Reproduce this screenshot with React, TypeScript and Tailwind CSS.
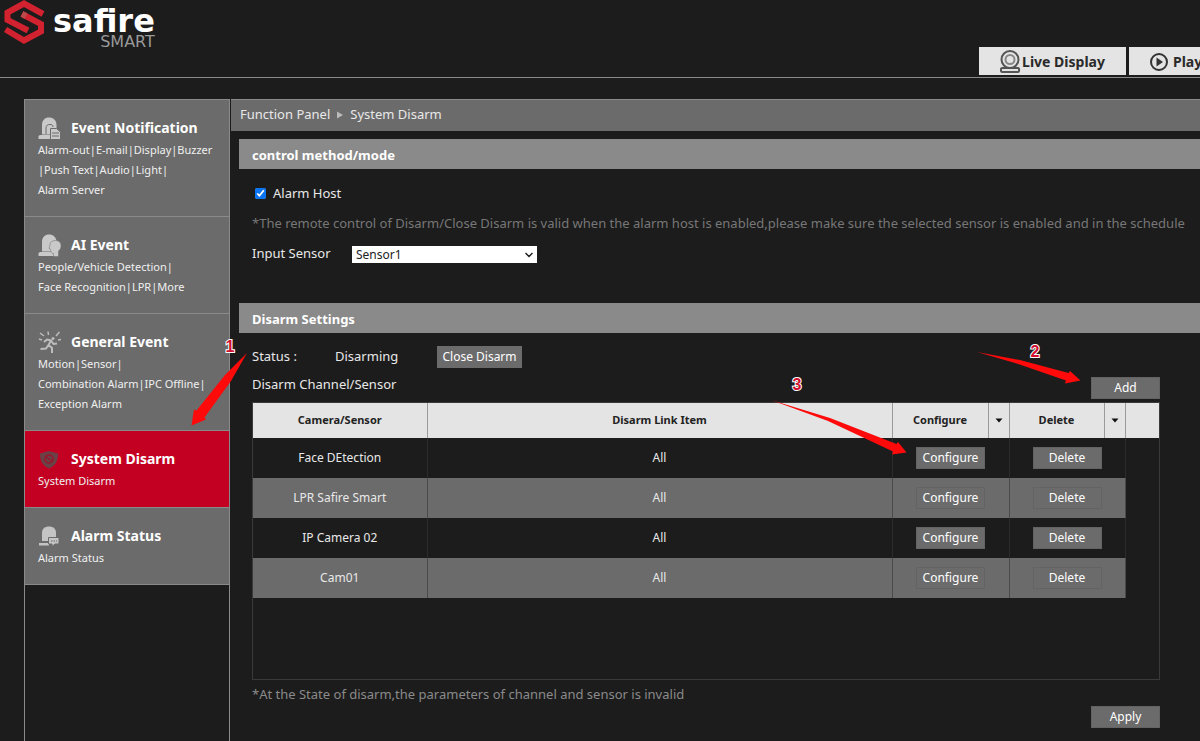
import type { ReactNode } from "react";

const DomeIcon = ({ children }: { children?: ReactNode }) => (
  <svg width="24" height="24" viewBox="0 0 24 24" fill="#c9c9c9">
    <path d="M4 18.500V9C4 4 7 1.500 11 1.500S18.500 4 18.500 9V18.500Z" />
    <path d="M0.500 20L2 19H17V23H0.500Z" />
    {children}
  </svg>
);

const NotificationIcon = () => (
  <DomeIcon>
    <path d="M8 18V12C8 9.500 9.500 8.500 12 8.500C14 8.500 15 9 15 11" fill="none" stroke="#6b6b6b" />
    <path d="M12.500 12.500H18.500L22.500 16V23.500H12.500Z" stroke="#6b6b6b" />
    <path d="M14 17H21M14 20H21" stroke="#6b6b6b" />
  </DomeIcon>
);

const AiIcon = () => (
  <DomeIcon>
    <path
      d="M12 12C12 9 14 7.500 17.500 7.500S23 9.500 23 12.500C23 15 22.500 16 20.500 18V23.500H15.500V20.500C12.500 20.500 13 18 12.500 16L11 15.500Z"
      stroke="#6b6b6b"
      strokeWidth="0.500"
    />
  </DomeIcon>
);

const RunnerIcon = () => (
  <svg width="24" height="24" viewBox="0 0 24 24" fill="none" stroke="#bdbdbd" strokeWidth="2">
    <circle cx="15" cy="8.500" r="1.500" fill="#bdbdbd" stroke="none" />
    <path d="M6 12L9 9.500L13 10.500L10.500 15L14 18V23M10.500 15L8 18.500L2.500 19M13 10.500L15.500 14L19 13.500" />
    <path d="M2 3L6 6M10 1.500L10.500 5M21.500 2L18 6M1 9L4 10M23 9.500L20 10" strokeWidth="1.500" />
  </svg>
);

const ShieldIcon = () => (
  <svg width="24" height="24" viewBox="0 0 24 24" fill="#6a4146">
    <path d="M11 4L20 6.500C20 14 18 18 11 21.500C4 18 2 14 2 6.500Z" />
    <circle cx="11" cy="12" r="4" fill="none" stroke="#97182c" strokeWidth="1.500" />
    <path d="M8 9.500L14 14.500" stroke="#97182c" strokeWidth="1.500" />
  </svg>
);

const StatusIcon = () => (
  <svg width="24" height="24" viewBox="0 0 24 24" fill="#c4c4c4">
    <path d="M4 17V9C4 4.500 7 2.500 11 2.500S18 4.500 18 9V17Z" />
    <path d="M1 19H11V21.500H1Z" />
    <path d="M10.500 13.500H21V20H17L14 22.500V20H10.500Z" stroke="#6b6b6b" />
    <path d="M13 17H19" stroke="#6b6b6b" strokeDasharray="1.500 1" />
  </svg>
);

const menu = [
  {
    title: "Event Notification",
    lines: ["Alarm-out|E-mail|Display|Buzzer", "|Push Text|Audio|Light|", "Alarm Server"],
    icon: <NotificationIcon />,
  },
  {
    title: "AI Event",
    lines: ["People/Vehicle Detection|", "Face Recognition|LPR|More"],
    icon: <AiIcon />,
  },
  {
    title: "General Event",
    lines: ["Motion|Sensor|", "Combination Alarm|IPC Offline|", "Exception Alarm"],
    icon: <RunnerIcon />,
  },
  { title: "System Disarm", lines: ["System Disarm"], icon: <ShieldIcon />, active: true },
  { title: "Alarm Status", lines: ["Alarm Status"], icon: <StatusIcon /> },
];

const rows = ["Face DEtection", "LPR Safire Smart", "IP Camera 02", "Cam01"];

const Logo = () => (
  <div className="flex pl-1">
    <svg width="41" height="45" viewBox="0 0 41 45" fill="none" stroke="#d3222f" strokeWidth="6">
      <path d="M39 14L20 3.500L3.500 12.500V20L24 30.500" />
      <path d="M1.500 29.500L20 40.500L37 31.500V24L18 14" />
      <path d="M18 14L22 16" stroke="#bb4a4c" />
    </svg>
    <div className="ml-2 flex flex-col items-end font-['DejaVu_Sans']">
      <span className="h-9 text-[32px] leading-[42px] font-bold text-white">safire</span>
      <span className="text-base leading-3 text-[#9a9a9a]">SMART</span>
    </div>
  </div>
);

const SmallButton = ({ label }: { label: string }) => (
  <button className="h-[22px] w-[69px] border border-[#636363] bg-[#6b6b6b] text-xs text-white">
    {label}
  </button>
);

const SectionTitle = ({ children }: { children: ReactNode }) => (
  <h2 className="h-[30px] bg-[#8a8a8a] pl-[13px] text-[13px] leading-8 font-bold text-white">{children}</h2>
);

const HeadMenu = ({ label }: { label: string }) => (
  <div className="flex h-full items-center">
    <span className="flex-1">{label}</span>
    <button aria-label={label + " all"} className="flex h-full w-[21px] items-center justify-center border-l border-[#9a9a9a]">
      <svg width="8" height="5" viewBox="0 0 8 5">
        <path d="M0.500 0.500H7.500L4 4.500Z" fill="#111" />
      </svg>
    </button>
  </div>
);

// numbered arrows drawn over the page
const Steps = () => (
  <svg
    className="pointer-events-none absolute top-0 left-0"
    width="1200"
    height="741"
    viewBox="0 0 1200 741"
    fill="#fe0a0a"
  >
    <path d="M247 353L231 381L204.500 417.500L206 419.500L191.500 425.500L194 409.500L196.500 410.500L225 375Z" />
    <path d="M977 352L1020 360L1068.500 373L1070 371L1080.500 380.500L1065 383.500L1066 380.500L1015 363Z" />
    <path d="M771 400L830 418L896.500 444L898 442L906.500 452.500L892 454.500L893 451.500L828 421Z" />
    <g
      className="font-['Liberation_Sans'] text-base font-bold"
      textAnchor="middle"
      fill="#d01030"
      stroke="#fff"
      strokeWidth="2"
      paintOrder="stroke"
    >
      <text x="230" y="352">1</text>
      <text x="1035" y="357">2</text>
      <text x="797" y="390">3</text>
    </g>
  </svg>
);

export default function App() {
  return (
    <div className="relative flex min-h-screen flex-col overflow-hidden bg-[#1c1c1c] font-['Noto_Sans',sans-serif] text-[13px] text-[#e8e8e8]">
      <header className="flex h-[78px] justify-between border-b border-[#8a8a8a]">
        <Logo />
        <nav className="flex w-[221px] gap-[3px] self-end overflow-hidden pb-0.5 text-sm font-bold text-[#2a2a2a]">
          <button className="flex h-7 w-[147px] shrink-0 items-center justify-center bg-[#e4e4e4] pt-0.5">
            <svg width="22" height="24" viewBox="0 0 22 24" fill="none" stroke="#555" strokeWidth="2">
              <circle cx="10" cy="9.500" r="8.500" />
              <circle cx="10" cy="9.500" r="4.500" stroke="#888" />
              <path d="M2 18H18C19.500 18 19.500 22 18 22H2C0.500 22 0.500 18 2 18Z" fill="#e4e4e4" />
            </svg>
            Live Display
          </button>
          <button className="flex h-7 w-[147px] shrink-0 items-center gap-1 bg-[#e4e4e4] pt-0.5 pl-5">
            <svg width="20" height="20" viewBox="0 0 20 20">
              <circle cx="10" cy="10" r="8" fill="none" stroke="#333" strokeWidth="2" />
              <path d="M7.500 5.500L14 10L7.500 14.500Z" fill="#333" />
            </svg>
            Play
          </button>
        </nav>
      </header>

      <div className="flex flex-1 pt-[21px] pl-6">
        <aside className="w-[206px] shrink-0 border-x border-t border-[#8a8a8a]">
          {menu.map((item) => (
            <a
              key={item.title}
              href="#"
              className={
                "block border-b border-[#8a8a8a] py-4 pl-[13px] whitespace-nowrap text-white " +
                (item.active ? "bg-[#c40022]" : "bg-[#6b6b6b]")
              }
            >
              <div className="flex h-6 items-center gap-[9px] text-sm font-bold">
                {item.icon}
                {item.title}
              </div>
              {item.lines.map((line) => (
                <p key={line} className="text-[11px] leading-5 text-[#f0f0f0]">
                  {line}
                </p>
              ))}
            </a>
          ))}
        </aside>

        <main className="min-w-0 flex-1 pl-px">
          <div className="flex h-8 items-center gap-[7px] border-t border-[#8a8a8a] bg-[#6b6b6b] pb-0.5 pl-[9px]">
            <a href="#">Function Panel</a>
            <svg width="6" height="8" viewBox="0 0 6 8">
              <path d="M0 0.500L6 4L0 7.500Z" fill="#bbb" />
            </svg>
            <span>System Disarm</span>
          </div>

          <div className="pt-2 pl-2">
            <SectionTitle>control method/mode</SectionTitle>
            <div className="h-[134px] pt-2.5 pl-[13px]">
              <label className="flex h-[29px] items-center gap-[7px] pl-[3px]">
                <input type="checkbox" defaultChecked className="h-[11px] w-[11px] accent-[#0b74f0]" />
                Alarm Host
              </label>
              <p className="leading-[31px] whitespace-nowrap text-[#777]">
                *The remote control of Disarm/Close Disarm is valid when the alarm host is enabled,please make sure the
                selected sensor is enabled and in the schedule
              </p>
              <div className="flex h-[30px] items-center">
                <label htmlFor="sensor" className="w-[100px]">
                  Input Sensor
                </label>
                <div className="relative">
                  <select id="sensor" className="block h-[17px] w-[185px] appearance-none bg-white pl-1 text-xs leading-[17px] text-[#222]">
                    <option>Sensor1</option>
                  </select>
                  <svg className="pointer-events-none absolute top-1.5 right-1" width="8" height="6" viewBox="0 0 8 6">
                    <path d="M0.500 1L4 4.500L7.500 1" fill="none" stroke="#222" strokeWidth="1.500" />
                  </svg>
                </div>
              </div>
            </div>

            <SectionTitle>Disarm Settings</SectionTitle>
            <div className="pt-3 pr-10 pl-[13px]">
              <div className="flex h-6 items-center">
                <span className="w-[83px]">Status :</span>
                <span className="w-[102px]">Disarming</span>
                <button className="h-[22px] w-[85px] bg-[#6b6b6b] text-xs text-white">Close Disarm</button>
              </div>
              <div className="flex h-[30px] items-end justify-between">
                <span className="leading-[30px]">Disarm Channel/Sensor</span>
                <SmallButton label="Add" />
              </div>

              <div className="mt-[3px] h-[278px] border border-[#3a3a3a]">
                <table className="w-full table-fixed border-collapse text-center text-xs">
                  <colgroup>
                    <col className="w-[174px]" />
                    <col />
                    <col className="w-[117px]" />
                    <col className="w-[116px]" />
                    <col className="w-[34px]" />
                  </colgroup>
                  <thead className="bg-[#e4e4e4] text-[11px] text-[#222]">
                    <tr className="h-[35px] divide-x divide-[#9a9a9a]">
                      <th>Camera/Sensor</th>
                      <th>Disarm Link Item</th>
                      <th className="h-[35px] p-0">
                        <HeadMenu label="Configure" />
                      </th>
                      <th className="h-[35px] p-0">
                        <HeadMenu label="Delete" />
                      </th>
                      <th></th>
                    </tr>
                  </thead>
                  <tbody>
                    {rows.map((name) => (
                      <tr key={name} className="group h-10 divide-x divide-[#2c2c2c] even:divide-[#4a4a4a]">
                        <td className="group-even:bg-[#6b6b6b]">{name}</td>
                        <td className="group-even:bg-[#6b6b6b]">All</td>
                        <td className="group-even:bg-[#6b6b6b]">
                          <SmallButton label="Configure" />
                        </td>
                        <td className="group-even:bg-[#6b6b6b]">
                          <SmallButton label="Delete" />
                        </td>
                        <td></td>
                      </tr>
                    ))}
                  </tbody>
                </table>
              </div>

              <p className="mt-[3px] leading-[23px] text-[#8a8a8a]">
                *At the State of disarm,the parameters of channel and sensor is invalid
              </p>
              <div className="flex justify-end">
                <SmallButton label="Apply" />
              </div>
            </div>
          </div>
        </main>
      </div>

      <Steps />
    </div>
  );
}
